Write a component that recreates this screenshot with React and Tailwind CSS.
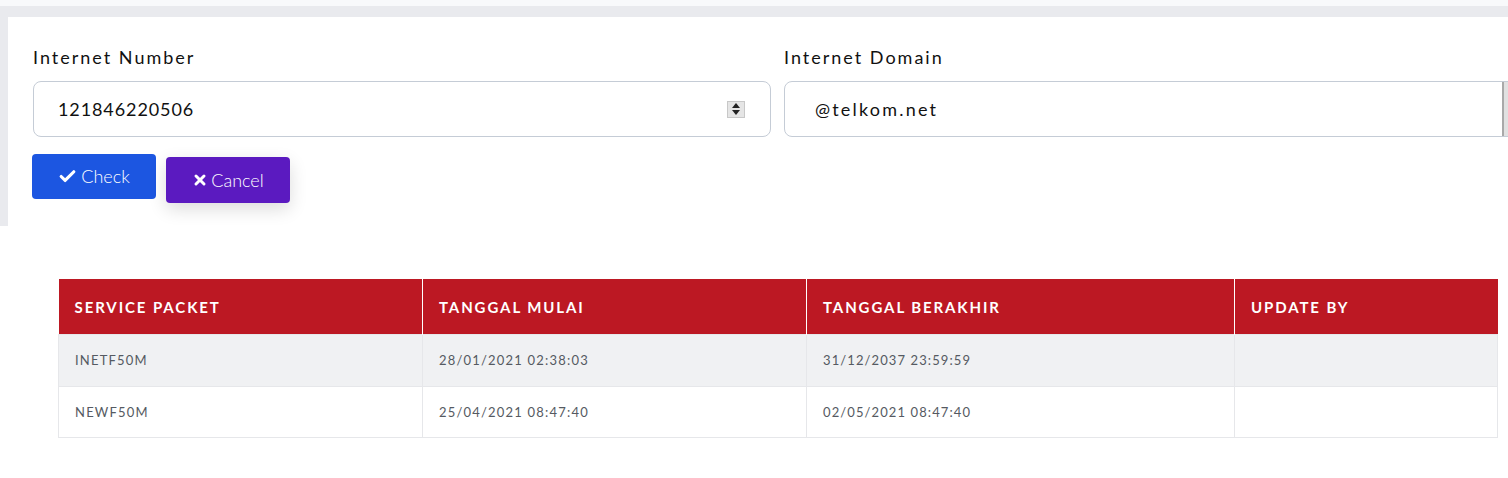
import { Check, X } from 'lucide-react'

const rows = [
  { packet: 'INETF50M', start: '28/01/2021 02:38:03', end: '31/12/2037 23:59:59', by: '' },
  { packet: 'NEWF50M', start: '25/04/2021 08:47:40', end: '02/05/2021 08:47:40', by: '' },
]

export default function App() {
  return (
    <div className="w-[1508px] h-[478px] overflow-hidden bg-white" style={{ fontFamily: 'Lato, "Open Sans", sans-serif' }}>
      {/* top bar remnant */}
      <div className="h-[6px] bg-[#f8f9fb]" />

      {/* form card on gray backdrop */}
      <div className="bg-[#e9eaee] pt-[11px] pl-[8px]">
        <div className="bg-white h-[209px] pl-[25px] pt-[27px]">
          <div className="flex gap-[13px]">
            <div className="w-[738px] shrink-0">
              <label className="block text-[18px] tracking-[2px] text-[#111] leading-[26px] mb-[11px]">Internet Number</label>
              <div className="h-[56px] rounded-[8px] border border-[#c5ccd6] flex items-center pl-[24px] pr-[25px]">
                <span className="flex-1 text-[18px] tracking-[0.9px] text-[#111]">121846220506</span>
                <span className="w-[18px] h-[17px] bg-[#e5e5e5] border border-[#c8c8c8] flex flex-col items-center justify-center gap-[2px]">
                  <svg width="8" height="5" viewBox="0 0 8 5"><path d="M4 0 L8 5 L0 5 Z" fill="#222" /></svg>
                  <svg width="8" height="5" viewBox="0 0 8 5"><path d="M0 0 L8 0 L4 5 Z" fill="#222" /></svg>
                </span>
              </div>
            </div>
            <div className="w-[738px] shrink-0">
              <label className="block text-[18px] tracking-[2px] text-[#111] leading-[26px] mb-[11px]">Internet Domain</label>
              <div className="h-[56px] rounded-[8px] border border-[#c5ccd6] flex items-center pl-[30px] relative">
                <span className="flex-1 text-[18px] tracking-[2.2px] text-[#111]">@telkom.net</span>
                <span className="absolute left-[717px] top-0 bottom-0 w-[20px] bg-[#e1e1e1] border-l-2 border-[#a9a9a9]" />
              </div>
            </div>
          </div>

          <div className="flex items-start gap-[10px] mt-[17px] -ml-[1px]">
            <button className="w-[124px] h-[45px] rounded-[4px] bg-[#1c56e1] text-white text-[18px] font-light flex items-center justify-center gap-[4px]">
              <Check size={19} strokeWidth={4} />
              Check
            </button>
            <button className="mt-[3px] w-[124px] h-[46px] rounded-[4px] bg-[#5b1ac0] text-white text-[18px] font-light flex items-center justify-center gap-[3px] shadow-[0_6px_18px_rgba(0,0,0,0.14)]">
              <X size={16} strokeWidth={4.5} />
              Cancel
            </button>
          </div>
        </div>
      </div>

      {/* results table */}
      <div className="pl-[58px] pr-[10px] pt-[53px]">
        <table className="w-[1440px] border-collapse table-fixed">
          <thead>
            <tr className="bg-[#bc1823] text-white h-[55px]">
              <th className="w-[364px] text-left pl-[16px] pt-[2px] text-[15px] font-bold tracking-[1.9px] border-r border-white">SERVICE PACKET</th>
              <th className="w-[384px] text-left pl-[16px] pt-[2px] text-[15px] font-bold tracking-[1.9px] border-r border-white">TANGGAL MULAI</th>
              <th className="w-[428px] text-left pl-[16px] pt-[2px] text-[15px] font-bold tracking-[1.9px] border-r border-white">TANGGAL BERAKHIR</th>
              <th className="text-left pl-[16px] pt-[2px] text-[15px] font-bold tracking-[1.9px]">UPDATE BY</th>
            </tr>
          </thead>
          <tbody>
            {rows.map((r, i) => (
              <tr key={i} className={i % 2 === 0 ? 'bg-[#f0f1f3] h-[52px]' : 'bg-white h-[51px]'}>
                <td className="pl-[16px] pt-[2px] text-[13px] tracking-[1.2px] text-[#555a62] border border-[#e6e7ea]">{r.packet}</td>
                <td className="pl-[16px] pt-[2px] text-[13px] tracking-[1.2px] text-[#555a62] border border-[#e6e7ea]">{r.start}</td>
                <td className="pl-[16px] pt-[2px] text-[13px] tracking-[1.1px] text-[#555a62] border border-[#e6e7ea]">{r.end}</td>
                <td className="pl-[16px] pt-[2px] text-[13px] text-[#555a62] border border-[#e6e7ea]">{r.by}</td>
              </tr>
            ))}
          </tbody>
        </table>
      </div>
    </div>
  )
}
